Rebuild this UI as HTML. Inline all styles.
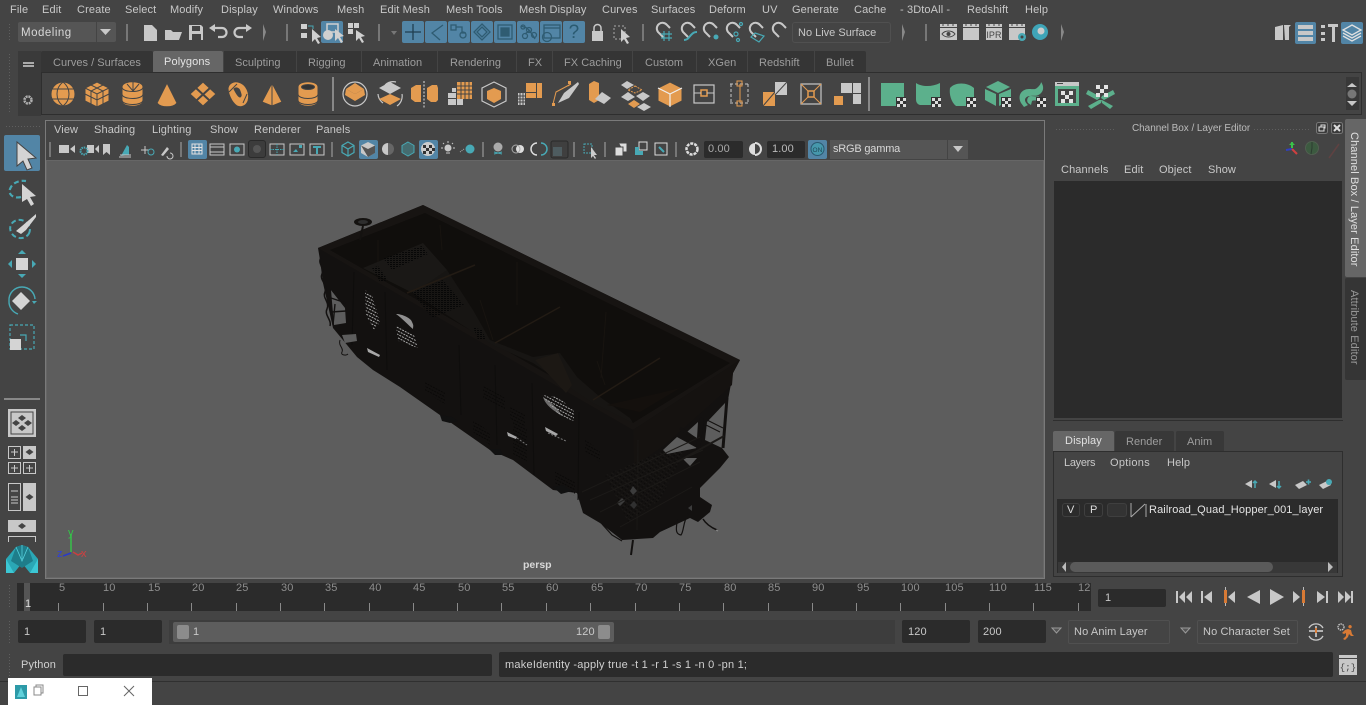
<!DOCTYPE html>
<html><head><meta charset="utf-8"><title>Maya</title>
<style>
html,body{margin:0;padding:0;background:#444;overflow:hidden}
#r{position:relative;width:1366px;height:705px;background:#444;overflow:hidden;font-family:"Liberation Sans",sans-serif;font-size:11px;color:#c8c8c8;letter-spacing:.12px}
#r div{position:absolute}
#r p{position:absolute;margin:0;line-height:14px;white-space:nowrap}
#r svg{position:absolute;left:0;top:0}
.d{background:#2b2b2b;border-radius:2px}
.g{color:#9d9d9d;letter-spacing:.03px}
.k{color:#8e8e8e;font-size:11px}
</style></head><body><div id="r">
<!-- backgrounds -->
<div style="left:18px;top:51px;width:23px;height:65px;background:#3a3a3a"></div>
<div style="left:41px;top:72px;width:1321px;height:43px;border:1px solid #2e2e2e;background:#444;box-sizing:border-box"></div>
<div style="left:41px;top:51px;width:112px;height:21px;background:#353535;border-radius:2px 2px 0 0"></div>
<div style="left:153px;top:51px;width:70px;height:21px;background:#666;border-radius:2px 2px 0 0"></div>
<div style="left:224px;top:51px;width:72px;height:21px;background:#353535"></div>
<div style="left:297px;top:51px;width:64px;height:21px;background:#353535"></div>
<div style="left:362px;top:51px;width:75px;height:21px;background:#353535"></div>
<div style="left:438px;top:51px;width:78px;height:21px;background:#353535"></div>
<div style="left:517px;top:51px;width:35px;height:21px;background:#353535"></div>
<div style="left:553px;top:51px;width:79px;height:21px;background:#353535"></div>
<div style="left:633px;top:51px;width:63px;height:21px;background:#353535"></div>
<div style="left:697px;top:51px;width:50px;height:21px;background:#353535"></div>
<div style="left:748px;top:51px;width:66px;height:21px;background:#353535"></div>
<div style="left:815px;top:51px;width:51px;height:21px;background:#353535;border-radius:0 2px 0 0"></div>
<div style="left:18px;top:22px;width:78px;height:20px;background:#555;border-radius:2px 0 0 2px"></div>
<div style="left:97px;top:22px;width:19px;height:20px;background:#555;border-radius:0 2px 2px 0"></div>
<div style="left:792px;top:22px;width:99px;height:21px;box-sizing:border-box;border:1px solid #505050;border-radius:3px"></div>
<div style="left:321px;top:21px;width:22px;height:22px;background:#5285a6;border-radius:2px"></div>
<div style="left:402px;top:21px;width:22px;height:22px;background:#5285a6;border-radius:2px"></div>
<div style="left:425px;top:21px;width:22px;height:22px;background:#5285a6;border-radius:2px"></div>
<div style="left:448px;top:21px;width:22px;height:22px;background:#5285a6;border-radius:2px"></div>
<div style="left:471px;top:21px;width:22px;height:22px;background:#5285a6;border-radius:2px"></div>
<div style="left:494px;top:21px;width:22px;height:22px;background:#5285a6;border-radius:2px"></div>
<div style="left:517px;top:21px;width:22px;height:22px;background:#5285a6;border-radius:2px"></div>
<div style="left:540px;top:21px;width:22px;height:22px;background:#5285a6;border-radius:2px"></div>
<div style="left:563px;top:21px;width:22px;height:22px;background:#5285a6;border-radius:2px"></div>
<div style="left:1295px;top:22px;width:21px;height:22px;background:#5285a6;border-radius:2px"></div>
<div style="left:1341px;top:22px;width:22px;height:22px;background:#5285a6;border-radius:2px"></div>
<div style="left:1346px;top:77px;width:13px;height:33px;background:#383838"></div>
<!-- viewport -->
<div style="left:45px;top:120px;width:1000px;height:459px;background:#444;border:1px solid #7a7a7a;box-sizing:border-box"></div>
<div style="left:46px;top:160px;width:998px;height:418px;background:#5d5d5d;box-shadow:inset 0 0 0 1px #666"></div>
<div style="left:188px;top:140px;width:19px;height:19px;background:#5285a6;border-radius:2px"></div>
<div style="left:359px;top:140px;width:19px;height:19px;background:#5285a6;border-radius:2px"></div>
<div style="left:419px;top:140px;width:19px;height:19px;background:#5285a6;border-radius:2px"></div>
<div style="left:248px;top:140px;width:18px;height:18px;background:#3c3c3c;border:1px solid #2a2a2a;border-radius:3px;box-sizing:border-box"></div>
<div class="d" style="left:704px;top:141px;width:39px;height:17px"></div>
<div class="d" style="left:767px;top:141px;width:38px;height:17px"></div>
<div style="left:808px;top:140px;width:19px;height:19px;background:#5285a6;border-radius:2px"></div>
<div style="left:830px;top:140px;width:117px;height:19px;background:#555"></div>
<div style="left:948px;top:140px;width:20px;height:19px;background:#555"></div>
<div style="left:4px;top:135px;width:36px;height:36px;background:#5285a6;border-radius:2px"></div>
<div style="left:4px;top:398px;width:36px;height:2px;background:#888"></div>
<!-- channel box -->
<div style="left:1054px;top:181px;width:288px;height:237px;background:#2b2b2b"></div>
<div style="left:1053px;top:420px;width:290px;height:1px;background:#2e2e2e"></div>
<div style="left:1053px;top:431px;width:61px;height:20px;background:#666;border-radius:2px 2px 0 0"></div>
<div style="left:1115px;top:431px;width:59px;height:20px;background:#383838;border-radius:2px 2px 0 0"></div>
<div style="left:1176px;top:431px;width:48px;height:20px;background:#383838;border-radius:2px 2px 0 0"></div>
<div style="left:1053px;top:451px;width:290px;height:126px;border:1px solid #2e2e2e;box-sizing:border-box"></div>
<div style="left:1057px;top:499px;width:281px;height:74px;background:#2b2b2b"></div>
<div style="left:1062px;top:503px;width:18px;height:14px;border:1px solid #3f3f3f;background:#2b2b2b;border-radius:3px;box-sizing:border-box"></div>
<div style="left:1084px;top:503px;width:19px;height:14px;border:1px solid #3f3f3f;background:#2b2b2b;border-radius:3px;box-sizing:border-box"></div>
<div style="left:1107px;top:503px;width:20px;height:14px;border:1px solid #3f3f3f;background:#333;border-radius:3px;box-sizing:border-box"></div>
<div style="left:1058px;top:562px;width:279px;height:11px;background:#383838"></div>
<div style="left:1070px;top:562px;width:203px;height:10px;background:#5a5a5a;border-radius:5px"></div>
<div style="left:1345px;top:119px;width:21px;height:158px;background:#666;border-radius:2px 0 0 2px"></div>
<div style="left:1345px;top:278px;width:21px;height:102px;background:#353535;border-radius:2px 0 0 2px"></div>
<!-- time slider -->
<div style="left:17px;top:583px;width:1074px;height:28px;background:#2b2b2b"></div>
<div style="left:24px;top:583px;width:6px;height:28px;background:#555"></div>
<div class="d" style="left:1098px;top:589px;width:68px;height:18px"></div>
<div class="d" style="left:18px;top:620px;width:68px;height:23px"></div>
<div class="d" style="left:94px;top:620px;width:68px;height:23px"></div>
<div style="left:169px;top:620px;width:726px;height:24px;background:#3d3d3d"></div>
<div style="left:173px;top:622px;width:441px;height:20px;background:#5d5d5d;border-radius:2px"></div>
<div style="left:177px;top:625px;width:12px;height:14px;background:#8c8c8c;border-radius:2px"></div>
<div style="left:598px;top:625px;width:12px;height:14px;background:#8c8c8c;border-radius:2px"></div>
<div class="d" style="left:902px;top:620px;width:68px;height:23px"></div>
<div class="d" style="left:978px;top:620px;width:68px;height:23px"></div>
<div style="left:1068px;top:620px;width:102px;height:24px;border:1px solid #505050;border-radius:2px;box-sizing:border-box"></div>
<div style="left:1197px;top:620px;width:101px;height:24px;border:1px solid #505050;border-radius:2px;box-sizing:border-box"></div>
<div class="d" style="left:63px;top:654px;width:429px;height:22px"></div>
<div class="d" style="left:499px;top:652px;width:834px;height:25px"></div>
<div style="left:0;top:681px;width:1366px;height:1px;background:#303030"></div>
<div style="left:8px;top:678px;width:144px;height:27px;background:#fff"></div>

<svg width="1366" height="705" viewBox="0 0 1366 705" fill="none">
<defs>
<pattern id="dots" width="3" height="3" patternUnits="userSpaceOnUse"><rect width="1" height="1" fill="#5f5f5f"/></pattern>
<pattern id="h1" width="3" height="2" patternUnits="userSpaceOnUse"><rect width="2" height="1" fill="#070707"/></pattern>
<pattern id="h2" width="3" height="3" patternUnits="userSpaceOnUse" patternTransform="rotate(28)"><rect width="2" height="1" fill="#a8a8a8"/></pattern>
<pattern id="h3" width="3" height="3" patternUnits="userSpaceOnUse" patternTransform="rotate(28)"><rect width="2" height="1" fill="#0a0908"/></pattern>
<pattern id="h4" width="4" height="4" patternUnits="userSpaceOnUse" patternTransform="rotate(35)"><rect width="3" height="1" fill="#1a1816"/><rect x="1" y="2" width="1" height="1" fill="#0a0908"/></pattern>
</defs>
<!-- grips -->
<g fill="url(#dots)"><rect x="8" y="24" width="4" height="18"/><rect x="8" y="52" width="4" height="62"/><rect x="4" y="125" width="36" height="4"/><rect x="8" y="585" width="4" height="24"/><rect x="8" y="621" width="4" height="22"/><rect x="8" y="654" width="4" height="22"/><rect x="1055" y="128" width="59" height="4"/><rect x="1254" y="128" width="56" height="4"/></g>
<!-- status line separators -->
<g fill="#777"><rect x="126" y="24" width="2" height="17"/><rect x="286" y="24" width="2" height="17"/><rect x="378" y="24" width="2" height="17"/><rect x="642" y="24" width="2" height="17"/><rect x="925" y="24" width="2" height="17"/><rect x="332" y="77" width="2" height="34" fill="#888"/><rect x="868" y="77" width="2" height="34" fill="#888"/>
<rect x="49" y="142" width="2" height="15"/><rect x="180" y="142" width="2" height="15"/><rect x="331" y="142" width="2" height="15"/><rect x="482" y="142" width="2" height="15"/><rect x="573" y="142" width="2" height="15"/><rect x="604" y="142" width="2" height="15"/><rect x="675" y="142" width="2" height="15"/></g>
<g fill="#888"><path d="M263 24l3 8-3 9zM902 24l3 8-3 9zM1061 24l3 8-3 9z"/></g>
<path d="M100 29h11l-5.500 6z" fill="#c8c8c8"/><path d="M391 31h6l-3 4z" fill="#777"/>
<!-- file icons -->
<g fill="#c8c8c8">
<path d="M144 25h8l5 5v11h-13z"/>
<path d="M165 30h6l2 2h9l-3 8h-14z"/>
<path d="M189 25h12l2 2v13h-14zM192 26v5h8v-5zM192 34v6h9v-6z" fill-rule="evenodd"/>
</g>
<g stroke="#c8c8c8" stroke-width="2.200"><path d="M214 28h8a4.500 4.500 0 0 1 0 9h-4M247 28h-8a4.500 4.500 0 0 0 0 9h4"/></g>
<path d="M215 24l-6 4 6 4zM246 24l6 4-6 4z" fill="#c8c8c8"/>
<!-- select mode -->
<g fill="#d0d0d0"><rect x="301" y="24" width="6" height="5"/><rect x="301" y="33" width="6" height="5"/><path d="M312 29l0 13 3-3 3 5 2-1-3-5 4-1z"/><path d="M331 31l0 12 3-3 3 5 2-1-3-5 4-1z" transform="translate(4 -2)"/><circle cx="328" cy="35" r="5"/><rect x="327" y="24" width="11" height="8" fill="none" stroke="#d0d0d0" stroke-width="1.500"/><rect x="348" y="23" width="5" height="5"/><rect x="354" y="23" width="5" height="5"/><rect x="348" y="29" width="5" height="5"/><path d="M356 30l0 11 3-3 3 5 2-1-3-5 4-1z"/></g>
<path d="M308 26h5v3" stroke="#48a9b5"/>
<!-- snap blue buttons -->
<g stroke="#2f5c72" stroke-width="1.300" fill="none">
<path d="M413 24v16M405 32h16" stroke="#203f50"/>
<path d="M443 25l-11 8 8 7" />
<rect x="451" y="25" width="5" height="5"/><path d="M456 27h6v6h4"/><circle cx="463" cy="35" r="3"/>
<path d="M482 24l8 8-8 8-8-8z"/><path d="M482 27l5 5-5 5-5-5z"/>
<rect x="498" y="25" width="14" height="14"/><rect x="501" y="28" width="8" height="8" fill="#2f5c72"/>
<path d="M521 26l6 2 5 6 3 5M525 34l5-4"/><circle cx="523" cy="27" r="2"/><circle cx="529" cy="30" r="2.500"/><circle cx="525" cy="36" r="2.500"/><circle cx="534" cy="35" r="2.500"/>
<rect x="544" y="25" width="16" height="13"/><path d="M544 28h16"/><circle cx="547" cy="37" r="4.500"/>
</g>
<text x="574" y="38" font-family="Liberation Sans" font-size="19" fill="#2a5a70" text-anchor="middle">?</text>
<!-- lock -->
<path d="M592 31h11v10h-11z" fill="#c8c8c8"/><path d="M594 31v-3a3.500 3.500 0 0 1 7 0v3" stroke="#c8c8c8" stroke-width="1.500"/>
<rect x="614" y="26" width="11" height="13" stroke="#aaa" stroke-dasharray="2 2"/><path d="M621 29v13l3-3 3 5 2-1-3-5 4-1z" fill="#d0d0d0"/>
<!-- magnets -->
<g stroke="#c8c8c8" stroke-width="2"><path d="M664 38l-6-6a5 5 0 0 1 9-7l3 3"/><path d="M688 37l-5-5a5 5 0 0 1 9-7l3 3"/><path d="M710 37l-5-5a5 5 0 0 1 9-7l3 3"/><path d="M733 37l-5-5a5 5 0 0 1 9-7l3 3"/><path d="M756 37l-5-5a5 5 0 0 1 9-7l3 3"/><path d="M779 37l-5-5a5 5 0 0 1 9-7l3 3"/></g>
<g stroke="#48a9b5" stroke-width="1.200"><path d="M664 31v10M669 31v10M661 34h11M661 38h11"/><path d="M684 40c4 0 5-3 7-5s3-3 6-3" stroke-width="2"/><circle cx="736" cy="34" r="2"/><circle cx="741" cy="24" r="1.500"/><circle cx="738" cy="40" r="1.500"/><path d="M755 33l9 3-5 6-8-5z"/></g>
<circle cx="716" cy="37" r="2.500" fill="#48a9b5"/>
<!-- render icons -->
<g fill="#c8c8c8"><path d="M940 24h17v3h-17zM940 28h17v12h-17zM963 28h16v12h-16zM963 24h16v3h-16zM986 28h16v12h-16zM986 24h16v3h-16zM1009 28h16v12h-16zM1009 24h16v3h-16z"/></g>
<g stroke="#444" stroke-width="1"><path d="M943 26v-2M948 26v-2M953 26v-2M966 26v-2M971 26v-2M976 26v-2M989 26v-2M994 26v-2M999 26v-2M1012 26v-2M1017 26v-2M1022 26v-2"/><path d="M942 34c3-4 10-4 13 0c-3 4-10 4-13 0z"/></g>
<circle cx="948.500" cy="34" r="2" fill="#444"/>
<text x="994" y="38" font-family="Liberation Sans" font-size="9" fill="#444" text-anchor="middle">IPR</text>
<circle cx="1022" cy="37" r="4" fill="#48a9b5"/><circle cx="1022" cy="37" r="1.500" fill="#444"/>
<circle cx="1040" cy="32" r="8" fill="#3fa5b8"/><circle cx="1041" cy="31" r="3.500" fill="#ccc"/>
<!-- right icons -->
<g fill="#c8c8c8"><path d="M1275 27l8-2v15l-8 0zM1284 25h7l-2 2v13h-4z"/><rect x="1298" y="25" width="15" height="4"/><rect x="1298" y="31" width="15" height="4"/><rect x="1298" y="37" width="15" height="4"/><rect x="1321" y="25" width="4" height="3"/><rect x="1321" y="32" width="4" height="3"/><rect x="1321" y="38" width="4" height="3"/><path d="M1328 24h10v3h-3v15h-3v-15h-4z"/></g>
<g fill="none" stroke="#e0e0e0" stroke-width="1.300"><path d="M1352 25l9 5-9 5-9-5z"/><path d="M1343 33l9 5 9-5M1343 36l9 5 9-5"/></g>
<!-- shelf left -->
<rect x="23" y="62" width="11" height="2" fill="#aaa"/><rect x="23" y="65" width="11" height="2" fill="#aaa"/>
<circle cx="28" cy="100" r="3.500" stroke="#b0b0b0" stroke-width="2.500" stroke-dasharray="2 .8"/>
<!-- shelf orange -->
<g fill="#e39b50" stroke="#444" stroke-width="1">
<circle cx="63" cy="94" r="12"/><path d="M52 89h22M52 99h22M63 82c-8 6-8 18 0 24M63 82c8 6 8 18 0 24" fill="none"/>
<path d="M97 82l12 6v13l-12 6-12-6v-13z"/><path d="M85 88l12 6 12-6M97 94v13M91 85l12 6v13M103 85l-12 6v13M85 94l12 6 12-6" fill="none"/>
<path d="M122 87c0-7 21-7 21 0v14c0 7-21 7-21 0z"/><path d="M122 87c0 6 21 6 21 0M122 94c0 6 21 6 21 0M122 100c0 6 21 6 21 0M133 82v10M127 84l6 7 6-7" fill="none"/>
<path d="M167 83l10 20c-4 5-16 5-20 0z"/>
<path d="M203 82l13 12-13 12-13-12z"/><path d="M196 88l13 12M210 88l-13 12" fill="none" stroke-width="2"/>
<path d="M238 82c9 2 12 12 10 19-2 5-7 7-11 5-6-4-9-13-9-18 1-5 6-7 10-6z"/><path d="M234 89c2-2 5-1 6 2s2 5 0 6c-2 0-5-6-6-8z" fill="#444"/><path d="M229 92l8-8M243 103l4-9" fill="none"/>
<path d="M272 83l10 19-10 4-10-4z"/><path d="M272 83v23" fill="none"/>
<path d="M298 87c0-7 20-7 20 0v14c0 7-20 7-20 0z"/><ellipse cx="308" cy="87" rx="6.500" ry="2.500" fill="#333"/><path d="M298 94c0 6 20 6 20 0M298 100c0 6 20 6 20 0" fill="none"/>
</g>
<!-- combine etc. -->
<g stroke="#c8c8c8" fill="none" stroke-width="1.200"><circle cx="355" cy="94" r="12"/><path d="M385 85a12 12 0 0 1 11-3M378 94a12 12 0 0 0 5 9M397 106a12 12 0 0 0 5-12" /></g>
<g fill="#e39b50"><path d="M355 83l9 6-9 5-9-5z"/><path d="M355 94l9-5 1 6-10 6-10-6 1-6z"/><path d="M390 94l11 5-11 6-11-6z"/></g>
<path d="M390 82l11 6-11 6-11-6z" fill="#c8c8c8"/>
<g fill="#e39b50"><path d="M411 88l5-3h5v17h-6l-4-3zM427 88l5-3h5l1 3v12l-2 2h-5l-4-3z"/></g>
<path d="M424 81v27" stroke="#ddd" stroke-dasharray="2 1.500"/>
<g fill="#e39b50"><rect x="457" y="82" width="15" height="17"/></g>
<g stroke="#444"><path d="M457 86h15M457 90h15M457 94h15M461 82v17M465 82v17M469 82v17"/></g>
<g fill="#c8c8c8"><rect x="448" y="93" width="8" height="5"/><rect x="448" y="99" width="8" height="6"/><rect x="457" y="99" width="6" height="6"/><rect x="452" y="88" width="4" height="4"/></g>
<path d="M494 82l12 6v13l-12 6-12-6v-13z" stroke="#c8c8c8" fill="none" stroke-width="1.200"/>
<path d="M494 88l7 3v8l-7 4-7-4v-8z" fill="#e39b50"/>
<g fill="#e39b50"><rect x="526" y="83" width="10" height="9"/><rect x="537" y="83" width="5" height="15"/><rect x="526" y="93" width="10" height="5"/></g>
<g fill="#c8c8c8"><rect x="518" y="93" width="7" height="12"/></g><g stroke="#444"><path d="M518 96h7M518 99h7M518 102h7M520 93v12M523 93v12"/></g>
<path d="M553 104l3-12 15-8-3 2" stroke="#e39b50" fill="none"/><path d="M558 103l6-10 14-11 1 2-10 14z" fill="#c8c8c8"/><g fill="#e39b50"><rect x="552" y="103" width="3" height="3"/><rect x="568" y="81" width="3" height="3"/></g>
<path d="M589 84l5-3 5 2v17l-5 3-5-3z" fill="#e39b50"/><path d="M602 92l9 6-7 6-9-5z" fill="#c8c8c8"/>
<g fill="#c8c8c8"><path d="M627 81l7 4-7 4-6-4zM643 92l7 4-7 5-7-5zM621 97l7-5 7 5-7 4zM644 103l7 4-7 4-7-4z"/></g>
<path d="M634 100l6 4-6 4-6-4z" fill="#e39b50"/><path d="M635 86l7 4-7 3-7-3z" stroke="#e39b50" stroke-dasharray="2 1"/>
<path d="M670 82l12 6v13l-12 6-12-6v-13z" fill="#e39b50" stroke="#444"/><path d="M658 88l12 6 12-6M670 94v13" stroke="#f0f0f0" stroke-width="1.200"/>
<rect x="694" y="85" width="20" height="18" stroke="#c8c8c8" stroke-width="1.200"/><rect x="701" y="90" width="6" height="6" stroke="#e39b50" stroke-width="1.500"/><path d="M694 93h7M707 93h7" stroke="#c8c8c8"/>
<path d="M730 84h19M730 103h19M731 84v19M748 84v19" stroke="#c8c8c8" stroke-dasharray="3 2"/><path d="M740 84v19" stroke="#e39b50"/><rect x="737" y="81" width="5" height="5" stroke="#e39b50"/><rect x="737" y="101" width="5" height="5" stroke="#e39b50"/>
<path d="M763 92h12v14h-12z" fill="#e39b50"/><path d="M763 106l12-14" stroke="#444"/><path d="M775 82h12v13h-12z" fill="#c8c8c8"/><path d="M775 95l12-13" stroke="#444"/>
<rect x="801" y="84" width="20" height="20" stroke="#c8c8c8" stroke-width="1.200"/><path d="M801 84l20 20M821 84l-20 20" stroke="#e39b50"/><rect x="808" y="91" width="6" height="6" fill="#444" stroke="#e39b50" stroke-width="1.500"/>
<g fill="#c8c8c8"><rect x="841" y="83" width="11" height="10"/><rect x="853" y="83" width="8" height="10"/><rect x="853" y="94" width="8" height="10"/></g><rect x="834" y="96" width="9" height="9" fill="#e39b50"/>
<!-- shelf green -->
<g fill="#5cb08c"><rect x="881" y="83" width="23" height="23"/>
<path d="M916 83c6 4 16 4 24 0v22h-20c-3-1-4-3-4-6z"/>
<path d="M950 88c5-6 17-6 24 0v18h-18c-5-4-7-12-6-18z"/>
<path d="M998 81l12 6-12 6-12-6zM985 89l11 5v12l-11-6zM1011 89l-12 5v12l12-6z"/>
<path d="M1021 103c-4-8 1-14 8-14 5 0 6 1 9-2 1-1 3-3 3-5 3 4 3 9-1 12-4 3-7 1-10 2-3 0-5 2-5 4 0 2 2 4 3 5l-4 2zM1028 103c-2-3 0-7 3-7s6 1 8 0l-2 4c-2 1-4 0-5 1l-1 4z"/>
<path d="M1055 82h24v24h-24zM1058 89v14h18v-14z" fill-rule="evenodd"/>
<path d="M1088 90l11 6 1 2-3 2-11-6zM1113 90l-11 6-1 2 3 2 11-6zM1088 106l11-6 3 0-1 3-10 6zM1113 106l-11-6 0 3 8 6z"/></g>
<rect x="1055" y="82" width="24" height="4" fill="#c8c8c8"/><path d="M1057 83h6v1h-6z" fill="#444"/>
<g fill="#e4e4e4"><rect x="1061" y="91" width="4" height="4"/><rect x="1069" y="91" width="4" height="4"/><rect x="1065" y="95" width="4" height="4"/><rect x="1061" y="99" width="4" height="4"/><rect x="1069" y="99" width="4" height="4"/><rect x="1096" y="85" width="4" height="4"/><rect x="1104" y="85" width="4" height="4"/><rect x="1100" y="89" width="4" height="4"/><rect x="1096" y="93" width="4" height="4"/><rect x="1104" y="93" width="4" height="4"/></g>
<g id="chk"><rect x="896" y="97" width="10" height="10" fill="#333"/><path d="M897 98h3v3h-3zM903 98h3v3h-3zM900 101h3v3h-3zM897 104h3v3h-3zM903 104h3v3h-3z" fill="#ddd"/></g>
<use href="#chk" x="35"/><use href="#chk" x="70"/><use href="#chk" x="105"/><use href="#chk" x="140"/>
<path d="M1347 87l5-4 5 4zM1347 101h10l-5 5z" fill="#c8c8c8"/><circle cx="1352" cy="94" r="4.500" fill="#777"/>
<!-- panel toolbar -->
<g fill="#c8c8c8"><path d="M59 145h10v8h-10zM70 149l5-4v8z"/><path d="M87 145h7v8h-7zM95 149l4-4v8z"/><path d="M103 144h7v11l-3.500-3-3.500 3z"/><path d="M121 156l6-11 2 2v8z" fill="#48a9b5"/><path d="M119 157h12M120 155h11" stroke="#c8c8c8"/></g>
<circle cx="84" cy="151" r="3.500" stroke="#48a9b5" stroke-width="2" stroke-dasharray="1.500 .8"/>
<path d="M141 150h8M145 146v8" stroke="#c8c8c8"/><circle cx="151" cy="152" r="3" stroke="#48a9b5"/><path d="M161 155l6-8 2 2-6 7z" fill="#c8c8c8"/><path d="M167 156a3 3 0 1 0 3-3" stroke="#c8c8c8"/>
<g stroke="#e0e0e0" stroke-width="1"><rect x="192" y="144" width="10" height="10"/><path d="M195 144v10M199 144v10M192 147.500h10M192 150.500h10"/></g>
<g stroke="#c8c8c8" stroke-width="1"><rect x="210" y="144" width="14" height="11"/><path d="M210 147h14M210 152h14"/><rect x="230" y="144" width="14" height="11"/><rect x="290" y="144" width="14" height="11"/><rect x="310" y="144" width="14" height="11"/><rect x="270" y="144" width="14" height="11"/><path d="M277 144v11M270 149.500h14" stroke="#48a9b5" stroke-dasharray="1.500 1"/></g>
<circle cx="237" cy="149.500" r="3" fill="#48a9b5"/><circle cx="257" cy="149" r="4" fill="#555"/><path d="M293 152l3-3 2 3zM299 145h3v3h-3z" fill="#48a9b5"/><path d="M313 146h8v2h-3v6h-2v-6h-3z" fill="#48a9b5"/>
<path d="M348 142l6 3.500v7l-6 3.500-6-3.500v-7zM342 145.500l6 3.500 6-3.500M348 149v7" stroke="#48a9b5" stroke-width="1.200"/>
<path d="M368 142l7 3.500v7.500l-7 4-7-4v-7.500z" fill="#c8c8c8"/><path d="M361 145.500l7 3.500 7-3.500v7.500l-7 4z" fill="#555"/>
<path d="M388 143a6 6 0 0 0 0 12z" fill="#c8c8c8"/><path d="M388 143a6 6 0 0 1 0 12z" fill="#666"/>
<path d="M408 142l6 3.500v7l-6 3.500-6-3.500v-7z" stroke="#48a9b5" fill="#48a9b5" fill-opacity=".4"/>
<circle cx="428" cy="149" r="7" fill="#ccc"/><g fill="#333"><rect x="423" y="145" width="3" height="3"/><rect x="429" y="145" width="3" height="3"/><rect x="426" y="148" width="3" height="3"/><rect x="432" y="148" width="3" height="3"/><rect x="423" y="151" width="3" height="3"/><rect x="429" y="151" width="3" height="3"/></g>
<circle cx="448" cy="148" r="3.500" fill="#c8c8c8"/><path d="M448 141v2M441 148h2M453 148h2M443 143l1 1M453 143l-1 1M446 153h4" stroke="#c8c8c8"/>
<circle cx="470" cy="149" r="4.500" fill="#48a9b5"/><path d="M460 152l4-3" stroke="#aaa" stroke-dasharray="1 1"/>
<circle cx="498" cy="147" r="4.500" fill="#aaa"/><path d="M494 154l8-2M494 152l8 2" stroke="#48a9b5"/>
<circle cx="520" cy="149" r="4" fill="#ddd"/><circle cx="516" cy="149" r="4" stroke="#aaa"/><path d="M537 143a6 6 0 0 0 0 12" stroke="#ddd" stroke-width="1.500"/><path d="M541 143a6 6 0 0 1 0 12" stroke="#48a9b5" stroke-width="1.500"/>
<rect x="551" y="141" width="17" height="17" rx="2" fill="#3f3f3f" stroke="#2a2a2a"/><rect x="553" y="147" width="9" height="9" fill="#4e5c60"/>
<rect x="584" y="144" width="8" height="9" stroke="#48a9b5" stroke-dasharray="2 1"/><path d="M591 147v11l2-2 2 3 1-1-2-3h3z" fill="#ccc"/>
<path d="M615 147h8v9h-8zM619 143h8v9h-3" fill="#ddd" stroke="#444"/>
<rect x="639" y="142" width="8" height="8" stroke="#ddd"/><path d="M635 147h4v4h4v4h-8z" fill="#48a9b5"/>
<rect x="655" y="143" width="12" height="12" stroke="#ddd"/><path d="M659 147l5 5" stroke="#48a9b5" stroke-width="2"/>
<circle cx="692" cy="149" r="5.500" stroke="#ddd" stroke-width="2.500" stroke-dasharray="3 1"/>
<path d="M755 143a6 6 0 0 0 0 12z" fill="#ddd"/><path d="M755 143a6 6 0 0 1 0 12" stroke="#ddd" stroke-width="2"/>
<circle cx="817.500" cy="149" r="6.500" stroke="#2a5a70" fill="#3fa5b0" fill-opacity=".6"/>
<text x="817.500" y="152" font-family="Liberation Sans" font-size="6.500" fill="#204858" text-anchor="middle">ON</text>
<path d="M953 146h10l-5 6z" fill="#c8c8c8"/>
<!-- car -->
<g>
<path d="M318 248L423 205L740 360L733 373L728 400L722 448L729 457L720 468L700 488L700 497L712 505L710 512L698 522L690 518L660 532L653 538L622 540L600 523L583 513L577 493L553 490L513 460L490 450L447 420L400 387L373 370L357 357L333 328L323 283L320 260Z" fill="#131110"/>
<!-- interior -->
<path d="M330 250L425 213L730 363L633 423Z" fill="#100e0c"/>
<!-- rim -->
<path d="M318 248L423 205L740 360L633 430ZM330 250L633 423L730 363L425 213Z" fill="#171412" fill-rule="evenodd"/>
<!-- slope sheets -->
<path d="M363 268L423 243L447 270L473 310L490 340L533 357L560 353L577 377L600 397L630 418L633 423L593 403L533 363L493 345L413 293Z" fill="#171513"/>
<path d="M363 268L423 243L447 270L413 293Z" fill="#1a1816"/>
<path d="M383 258L422 246L428 254L392 270Z" fill="url(#h1)"/><path d="M412 292L443 280L464 305L432 318Z" fill="url(#h1)"/><path d="M372 268L378 266L388 280L380 282Z" fill="url(#h1)"/>
<path d="M473 327L482 330L486 340L478 340Z" fill="url(#h1)"/>
<path d="M535 360L558 353L572 385L566 393Z" fill="#1c1814"/>
<path d="M607 405L660 393L680 388L640 412Z" fill="#14100d"/>
<g stroke="#221b14" stroke-width="1.500"><path d="M407 293L475 265M495 343L560 307M593 400L660 358"/></g>
<g stroke="#181410" stroke-width="1"><path d="M378 240V262M517 262V305M606 312L601 378M480 300L493 340M597 361L605 385M440 225L442 250"/></g>
<!-- end wall -->
<path d="M633 430L740 360L733 373L732 385L665 445L634 466Z" fill="#151210"/>
<!-- side posts -->
<g stroke="#0e0d0c" stroke-width="1"><path d="M385 292L387 370M354 272L352 345M459 345L461 415M495 365L497 445M532 383L534 475M579 412L578 500"/></g>
<g stroke="#181614" stroke-width="1.500"><path d="M638 440L637 530"/></g>
<g fill="url(#h3)"><path d="M425 380L445 392L445 404L425 392ZM473 420L490 432L490 445L473 432ZM483 385L505 398L505 410L483 398ZM510 405L525 415L525 430L510 420ZM513 420L527 428L527 462L513 454ZM555 470L575 482L575 496L555 484ZM585 440L600 450L600 462L585 452Z"/></g>
<g fill="url(#h4)"><path d="M605 475L690 440L660 500L628 522Z"/></g>
<!-- white hatched highlights -->
<g fill="url(#h2)"><path d="M365 290L372 295L380 322L374 330L366 315Z"/><path d="M396 325L414 335L418 348L398 341Z"/><path d="M541 395L558 397L574 411L574 421L560 416Z"/></g>
<path d="M396 314C402 314 411 318 412 322C414 326 413 326 413 329C408 325 402 318 396 314Z" fill="#b0b0b0" opacity=".8"/>
<path d="M543 397C548 400 558 408 562 416C553 410 546 406 543 397Z" fill="#a8a8a8" opacity=".6"/>
<path d="M367 348L380 355L379 357L368 352ZM545 427L558 434L556 436L546 431ZM507 432L517 437L516 439L508 436Z" fill="#a8a8a8"/>
<path d="M517 438L527 445M548 433L566 441" stroke="#777" stroke-dasharray="2 1.500"/>
<!-- brake wheel -->
<ellipse cx="363" cy="222" rx="9" ry="4" fill="#141210"/><ellipse cx="363" cy="222" rx="5" ry="2" fill="#2e2e2e"/><path d="M363 226L360 240" stroke="#141210" stroke-width="2"/>
<!-- left end ladders -->
<path d="M331 290L345 308L346 323L334 325Z" fill="#5d5d5d"/>
<path d="M342 335L356 334L357 341L345 343Z" fill="#5d5d5d"/>
<path d="M321 258C317 263 325 268 322 274C319 280 328 284 325 292C322 298 330 302 327 309C324 315 332 320 330 326" stroke="#131110" stroke-width="1.500"/>
<path d="M331 289L343 304M331 298L346 303M331 312L346 311M335 304L333 325" stroke="#131110" stroke-width="1.400"/>
<path d="M340 340C338 346 344 348 342 352C340 355 346 356 348 354" stroke="#131110"/>
<!-- bottom bumps -->
<path d="M440 415L452 417L458 421L450 423L442 421ZM489 449L495 455L503 455L500 449ZM553 487L561 494L572 491L563 485Z" fill="#111"/>
<!-- right end cutouts -->
<path d="M707 422L726 402L722 448L705 440Z" fill="#5d5d5d"/>
<path d="M687 432L698 422L697 438Z" fill="#5d5d5d"/>
<path d="M663 450L677 437L697 448L667 454Z" fill="#5d5d5d"/>
<path d="M682 458L697 458L690 466Z" fill="#5d5d5d"/>
<path d="M707 420L723 428M706 425L720 432" stroke="#131110" stroke-width="1"/>
<path d="M680 428L698 441" stroke="#131110" stroke-width="3"/>
<path d="M702 418L698 450" stroke="#131110" stroke-width="4"/>
<path d="M727 398L723 448" stroke="#131110" stroke-width="3"/>
<path d="M677 462L724 436" stroke="#1b1917" stroke-width="2"/>
<!-- couplers & cables -->
<path d="M703 519C706 524 710 527 717 530" stroke="#131110" stroke-width="1.500"/>
<path d="M716 530L718 531" stroke="#888"/>
<path d="M633 540L631 555" stroke="#131110" stroke-width="2"/>
<path d="M660 531C666 528 672 527 677 521C677 526 674 534 681 535C684 531 683 522 688 514" stroke="#131110" stroke-width="1.200"/>
<path d="M602 524L612 535L622 541" stroke="#131110" stroke-width="1.200"/>
<path d="M622 498L625 501L620 506L617 503ZM633 486L637 491L633 495L630 491ZM688 508L692 505L692 511Z" fill="#3c3c3c"/>
<path d="M630 505L634 501L637 505L634 509Z" fill="#303030"/>
<g stroke="#1c1a18" stroke-width="1"><path d="M582 492L700 437M590 500L703 450M600 512L700 462M620 527L692 487"/></g>
</g>
<!-- axis -->
<path d="M71 552v-18" stroke="#36c24a" stroke-width="1.500"/><path d="M71 553l-8 3" stroke="#2a3ac8" stroke-width="1.500"/><path d="M73 552l5 3 4-2" stroke="#c84040" stroke-width="1.500"/>
<!-- tools -->
<path d="M17 142v24l6-5 4 9 5-2-4-9 8-1z" fill="#d4d4d4" stroke="#444"/>
<path d="M21 198c-8 2-13-3-11-8 2-6 9-9 16-8" stroke="#48a9b5" stroke-width="2.200" stroke-dasharray="5 3" transform="translate(0 -1)"/>
<path d="M22 184v18l5-3 4 7 3-2-4-7 6-1z" fill="#d4d4d4"/>
<ellipse cx="20" cy="229" rx="10" ry="9" stroke="#48a9b5" stroke-width="2" stroke-dasharray="5 3" transform="rotate(20 20 229)"/>
<path d="M16 231l6-5 14-12 0 3-10 13-5 4z" fill="#d4d4d4"/>
<rect x="16" y="258" width="12" height="12" fill="#d4d4d4"/><path d="M22 250l4 4h-8zM22 278l4-4h-8zM8 264l4-4v8zM36 264l-4-4v8z" fill="#48a9b5"/>
<path d="M22 287a13 13 0 0 1 13 12M18 314a13 13 0 0 1-9-13a13 13 0 0 1 13-14" stroke="#48a9b5" stroke-width="1.400"/>
<path d="M37 301h-5l2 3z" fill="#48a9b5"/><path d="M21 292l9 9-9 9-9-9z" fill="#d4d4d4"/>
<rect x="10" y="325" width="24" height="24" stroke="#48a9b5" stroke-width="1.200" stroke-dasharray="3 2"/><rect x="10" y="339" width="11" height="11" fill="#d4d4d4"/><path d="M20 335h6v6" stroke="#48a9b5" stroke-width="1.200"/>
<!-- layout buttons -->
<rect x="8" y="409" width="28" height="28" fill="#c8c8c8"/><rect x="11" y="412" width="22" height="22" stroke="#444"/>
<path d="M22 415l4 3-4 3-4-3zM16 420l4 3-4 3-4-3zM28 420l4 3-4 3-4-3zM22 425l4 3-4 3-4-3z" fill="#444"/>
<rect x="8.500" y="446.500" width="12" height="12" stroke="#c8c8c8"/><rect x="8.500" y="462.500" width="12" height="11" stroke="#c8c8c8"/><rect x="23.500" y="462.500" width="12" height="11" stroke="#c8c8c8"/><rect x="23" y="446" width="13" height="13" fill="#c8c8c8"/>
<path d="M11 452h7M14.500 449v7M11 468h7M14.500 465v7M26 468h7M29.500 465v7" stroke="#c8c8c8"/><path d="M29.500 449l4 3-4 3-4-3z" fill="#444"/>
<rect x="8.500" y="483.500" width="12" height="27" stroke="#c8c8c8"/><rect x="23" y="483" width="13" height="28" fill="#c8c8c8"/><path d="M29.500 494l4 3-4 3-4-3z" fill="#444"/><path d="M11 491h7M11 497h7M11 500h7M11 503h7" stroke="#c8c8c8"/>
<rect x="8" y="520" width="28" height="12" fill="#c8c8c8"/><path d="M22 523l4 3-4 3-4-3z" fill="#444"/><path d="M8.500 542v-5.500h27v5.500" stroke="#c8c8c8"/>
<!-- maya logo -->
<path d="M6 559l10-12 6-2 6 2 10 12v14h-8l-8-10-8 10H6z" fill="#2aa7b5"/>
<path d="M16 547l6-2 6 2 5 14-11 7-11-7z" fill="#1e7d8a"/><path d="M22 545v14M16 547l6 14 6-14" stroke="#55d0dc" stroke-width=".8"/><path d="M6 559l8 14H6zM38 559l-8 14h8z" fill="#3cc7d4"/>
<!-- time ticks -->
<g fill="#8a8a8a"><rect x="58" y="603" width="1" height="8"/><rect x="103" y="603" width="1" height="8"/><rect x="147" y="603" width="1" height="8"/><rect x="191" y="603" width="1" height="8"/><rect x="236" y="603" width="1" height="8"/><rect x="280" y="603" width="1" height="8"/><rect x="324" y="603" width="1" height="8"/><rect x="369" y="603" width="1" height="8"/><rect x="413" y="603" width="1" height="8"/><rect x="457" y="603" width="1" height="8"/><rect x="501" y="603" width="1" height="8"/><rect x="546" y="603" width="1" height="8"/><rect x="590" y="603" width="1" height="8"/><rect x="635" y="603" width="1" height="8"/><rect x="679" y="603" width="1" height="8"/><rect x="723" y="603" width="1" height="8"/><rect x="768" y="603" width="1" height="8"/><rect x="812" y="603" width="1" height="8"/><rect x="856" y="603" width="1" height="8"/><rect x="900" y="603" width="1" height="8"/><rect x="945" y="603" width="1" height="8"/><rect x="989" y="603" width="1" height="8"/><rect x="1033" y="603" width="1" height="8"/><rect x="1078" y="603" width="1" height="8"/></g>
<!-- playback -->
<g fill="#c8c8c8">
<path d="M1176 591h2v12h-2zM1185 591l-6 6 6 6zM1192 591l-6 6 6 6z"/>
<path d="M1201 591h2v12h-2zM1212 591l-8 6 8 6z"/>
<path d="M1235 591l-7 6 7 6z"/>
<path d="M1260 590l-13 7 13 7z"/><path d="M1270 589l14 8-14 8z"/>
<path d="M1293 591l7 6-7 6z"/>
<path d="M1317 591l8 6-8 6zM1326 591h2v12h-2z"/>
<path d="M1338 591l6 6-6 6zM1345 591l6 6-6 6zM1351 591h2v12h-2z"/></g>
<rect x="1224" y="590" width="3" height="13" fill="#d87a35"/><rect x="1302" y="590" width="3" height="13" fill="#d87a35"/>
<path d="M1225.500 587v3M1225.500 603v3M1303.500 587v3M1303.500 603v3" stroke="#bbb"/>
<g stroke="#999" fill="#555"><path d="M1052 628h9l-4.500 5zM1181 628h9l-4.500 5z"/></g>
<path d="M1309 631h14M1316 626v11" stroke="#d8d8d8" stroke-width="1.500"/><path d="M1309 628a8 8 0 0 1 14 0M1323 636a8 8 0 0 1-14 0" stroke="#c8c8c8" stroke-width="1.300"/><rect x="1315" y="628" width="2" height="5" fill="#d87a35"/>
<circle cx="1341" cy="627" r="3" stroke="#c8c8c8" stroke-width="1.300" stroke-dasharray="1.500 .7"/>
<path d="M1348 629l3 1 1 4 2 2h-3l-2-2-1 3-3 3-2-1 3-3v-3l-2 1-2-1 3-3zM1350 625a1.700 1.700 0 1 0 .1 0z" fill="#d87a35"/>
<!-- script icon -->
<rect x="1339" y="655" width="18" height="3" fill="#c8c8c8"/><rect x="1339" y="659" width="18" height="16" fill="#c8c8c8"/><text x="1348" y="670" font-family="Liberation Mono" font-size="9" fill="#444" text-anchor="middle">{;}</text>
<!-- channel box icons -->
<rect x="1316.500" y="122.500" width="11" height="11" rx="2" fill="#3a3a3a" stroke="#777"/><rect x="1319" y="127" width="5" height="4" stroke="#ddd"/><path d="M1321 127v-2h4v3h-1" stroke="#ddd"/>
<rect x="1331.500" y="122.500" width="11" height="11" rx="2" fill="#3a3a3a" stroke="#777"/><path d="M1334 125l6 6M1340 125l-6 6" stroke="#ddd" stroke-width="2"/>
<path d="M1292 148v-6" stroke="#3ac24a" stroke-width="2"/><path d="M1292 142l-3 3h6z" fill="#3ac24a"/><path d="M1292 149l-6 1" stroke="#3040c0" stroke-width="2"/><path d="M1292 149l5 5" stroke="#d04040" stroke-width="2"/>
<circle cx="1312" cy="148" r="6.500" fill="#3c5a40" stroke="#505f50"/><path d="M1312 142v6l-1 6" stroke="#2c3c30"/>
<path d="M1329 158l10-14" stroke="#5f4242" stroke-width="1.600"/>
<!-- layers icons -->
<g fill="#c8c8c8"><path d="M1245 484l7-4v8zM1269 484l7-4v8zM1295 485l8-4 4 4-8 4zM1319 485l8-4 4 4-8 4z"/></g>
<path d="M1255 488v-6M1253 483l2-2 2 2M1279 481v6M1277 486l2 2 2-2" stroke="#48a9b5" stroke-width="1.500"/><path d="M1306 482h5M1308.500 479.500v5" stroke="#48a9b5" stroke-width="1.600"/><circle cx="1329" cy="482" r="3" fill="#48a9b5"/>
<path d="M1131 517l14-13M1146 504v13M1131 503v14" stroke="#aaa"/>
<path d="M1066 562l-4 5 4 5zM1328 562l5 5-5 5z" fill="#bbb"/>
<!-- window controls -->
<rect x="15" y="685" width="12" height="14" fill="#2d9aa8"/><path d="M17 697l4-10 4 10z" fill="#5fd0da"/>
<rect x="34" y="687" width="7" height="8" stroke="#888"/><path d="M36 687v-2h7v8h-2" stroke="#888"/>
<rect x="78.500" y="686.500" width="9" height="9" stroke="#666"/>
<path d="M124 686l10 10M134 686l-10 10" stroke="#666"/>
</svg>

<!-- menu text -->
<p style="left:10px;top:3px">File</p><p style="left:42px;top:3px">Edit</p><p style="left:77px;top:3px">Create</p><p style="left:125px;top:3px">Select</p><p style="left:170px;top:3px">Modify</p><p style="left:221px;top:3px">Display</p><p style="left:273px;top:3px">Windows</p><p style="left:337px;top:3px">Mesh</p><p style="left:380px;top:3px">Edit Mesh</p><p style="left:446px;top:3px">Mesh Tools</p><p style="left:519px;top:3px">Mesh Display</p><p style="left:602px;top:3px">Curves</p><p style="left:651px;top:3px">Surfaces</p><p style="left:709px;top:3px">Deform</p><p style="left:762px;top:3px">UV</p><p style="left:792px;top:3px">Generate</p><p style="left:854px;top:3px">Cache</p><p style="left:900px;top:3px">- 3DtoAll -</p><p style="left:967px;top:3px">Redshift</p><p style="left:1025px;top:3px">Help</p>
<p style="left:21px;top:26px;color:#d8d8d8;font-size:11.5px;letter-spacing:.5px">Modeling</p>
<p style="left:798px;top:26px;letter-spacing:0">No Live Surface</p>
<!-- shelf tabs -->
<p class="g" style="left:53px;top:56px">Curves / Surfaces</p><p style="left:164px;top:55px;color:#e4e4e4">Polygons</p><p class="g" style="left:235px;top:56px">Sculpting</p><p class="g" style="left:308px;top:56px">Rigging</p><p class="g" style="left:373px;top:56px">Animation</p><p class="g" style="left:450px;top:56px">Rendering</p><p class="g" style="left:528px;top:56px">FX</p><p class="g" style="left:564px;top:56px">FX Caching</p><p class="g" style="left:645px;top:56px">Custom</p><p class="g" style="left:708px;top:56px">XGen</p><p class="g" style="left:759px;top:56px">Redshift</p><p class="g" style="left:826px;top:56px">Bullet</p>
<!-- panel menu -->
<p style="left:54px;top:123px">View</p><p style="left:94px;top:123px">Shading</p><p style="left:152px;top:123px">Lighting</p><p style="left:210px;top:123px">Show</p><p style="left:254px;top:123px">Renderer</p><p style="left:316px;top:123px">Panels</p>
<p style="left:708px;top:142px;color:#aaa">0.00</p><p style="left:772px;top:142px;color:#bbb">1.00</p><p style="left:833px;top:142px;color:#d8d8d8;letter-spacing:-.2px">sRGB gamma</p>
<p style="left:523px;top:558px;font-weight:bold;font-size:10.500px;color:#d8d8d8;letter-spacing:0">persp</p>
<p style="left:68px;top:526px;color:#36c24a">y</p><p style="left:81px;top:547px;color:#d04040">x</p><p style="left:57px;top:547px;color:#3040d8">z</p>
<!-- channel box text -->
<p style="left:1132px;top:122px;font-size:10px;letter-spacing:-.05px;color:#bbb">Channel Box / Layer Editor</p>
<p style="left:1061px;top:163px">Channels</p><p style="left:1124px;top:163px">Edit</p><p style="left:1159px;top:163px">Object</p><p style="left:1208px;top:163px">Show</p>
<p style="left:1065px;top:434px;color:#e0e0e0">Display</p><p class="g" style="left:1126px;top:435px">Render</p><p class="g" style="left:1187px;top:435px">Anim</p>
<p style="left:1064px;top:456px;letter-spacing:-.3px">Layers</p><p style="left:1110px;top:456px;letter-spacing:.3px">Options</p><p style="left:1167px;top:456px">Help</p>
<p style="left:1067px;top:503px;color:#ddd">V</p><p style="left:1090px;top:503px;color:#ddd">P</p><p style="left:1149px;top:503px;color:#e4e4e4">Railroad_Quad_Hopper_001_layer</p>
<p style="left:1347px;top:132px;writing-mode:vertical-rl;color:#e0e0e0;line-height:14px">Channel Box / Layer Editor</p>
<p style="left:1347px;top:290px;writing-mode:vertical-rl;color:#999;line-height:14px">Attribute Editor</p>
<!-- time labels -->
<p class="k" style="left:59px;top:581px">5</p><p class="k" style="left:103px;top:581px">10</p><p class="k" style="left:148px;top:581px">15</p><p class="k" style="left:192px;top:581px">20</p><p class="k" style="left:236px;top:581px">25</p><p class="k" style="left:281px;top:581px">30</p><p class="k" style="left:325px;top:581px">35</p><p class="k" style="left:369px;top:581px">40</p><p class="k" style="left:413px;top:581px">45</p><p class="k" style="left:458px;top:581px">50</p><p class="k" style="left:502px;top:581px">55</p><p class="k" style="left:546px;top:581px">60</p><p class="k" style="left:591px;top:581px">65</p><p class="k" style="left:635px;top:581px">70</p><p class="k" style="left:679px;top:581px">75</p><p class="k" style="left:724px;top:581px">80</p><p class="k" style="left:768px;top:581px">85</p><p class="k" style="left:812px;top:581px">90</p><p class="k" style="left:857px;top:581px">95</p><p class="k" style="left:901px;top:581px">100</p><p class="k" style="left:945px;top:581px">105</p><p class="k" style="left:989px;top:581px">110</p><p class="k" style="left:1034px;top:581px">115</p>
<p class="k" style="left:1078px;top:581px;width:13px;overflow:hidden">120</p>
<p style="left:25px;top:597px;color:#ddd">1</p>
<p style="left:1105px;top:591px">1</p>
<p style="left:24px;top:625px">1</p><p style="left:100px;top:625px">1</p><p style="left:193px;top:625px">1</p><p style="left:576px;top:625px">120</p>
<p style="left:908px;top:625px">120</p><p style="left:983px;top:625px">200</p>
<p style="left:1074px;top:625px">No Anim Layer</p><p style="left:1203px;top:625px">No Character Set</p>
<p style="left:21px;top:658px;color:#d0d0d0">Python</p>
<p style="left:505px;top:658px;color:#d0d0d0;letter-spacing:.23px">makeIdentity -apply true -t 1 -r 1 -s 1 -n 0 -pn 1;</p>
</div></body></html>
